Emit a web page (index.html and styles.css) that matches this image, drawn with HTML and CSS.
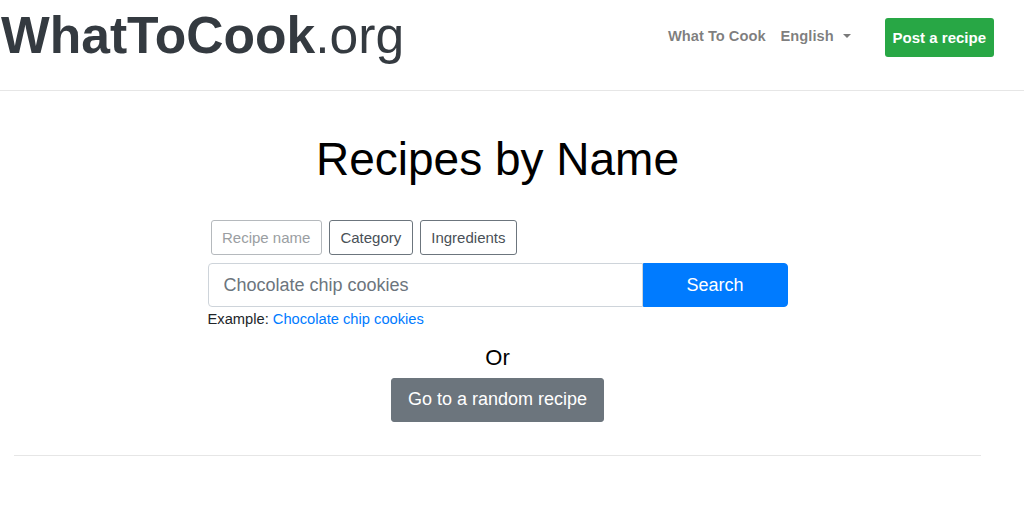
FILE: index.html
```html
<!DOCTYPE html>
<html lang="en">
<head>
<meta charset="utf-8">
<title>WhatToCook.org</title>
<link rel="stylesheet" href="styles.css">
</head>
<body>
<header class="site-header">
  <a class="brand" href="#"><b>WhatToCook</b>.org</a>
  <nav class="nav">
    <a class="nav-link" href="#">What To Cook</a>
    <a class="nav-link dropdown" href="#">English<span class="caret"></span></a>
    <a class="btn-post" href="#">Post a recipe</a>
  </nav>
</header>
<main class="main">
  <h1 class="title">Recipes by Name</h1>
  <div class="search">
    <div class="tabs">
      <button class="tab tab-active">Recipe name</button>
      <button class="tab">Category</button>
      <button class="tab">Ingredients</button>
    </div>
    <form class="search-row">
      <input class="search-input" type="text" placeholder="Chocolate chip cookies">
      <button class="btn-search" type="button">Search</button>
    </form>
    <p class="example">Example: <a href="#">Chocolate chip cookies</a></p>
  </div>
  <p class="or">Or</p>
  <div class="random-wrap"><button class="btn-random">Go to a random recipe</button></div>
  <hr class="divider">
</main>
</body>
</html>
```
FILE: styles.css
```css
* { box-sizing: border-box; }
body {
  margin: 0;
  font-family: "Liberation Sans", Arial, sans-serif;
  font-size: 15px;
  color: #212529;
  background: #fff;
}
a { text-decoration: none; }

.site-header {
  height: 91px;
  border-bottom: 1px solid #e6e6e6;
  display: flex;
  align-items: center;
  justify-content: space-between;
  padding: 0 30px 0 1px;
}
.brand {
  font-size: 51.6px;
  color: #343a40;
  line-height: 1;
  margin-top: -19px;
}
.brand b { font-weight: 700; }

.nav {
  display: flex;
  align-items: center;
  margin-top: -15px;
}
.nav-link {
  font-weight: 700;
  font-size: 14.7px;
  color: rgba(0,0,0,.52);
  line-height: 22px;
  white-space: nowrap;
  margin-bottom: 3px;
}
.nav-link + .nav-link { margin-left: 15px; }
.caret {
  display: inline-block;
  margin-left: 9px;
  vertical-align: 3px;
  border-top: 4px solid rgba(0,0,0,.52);
  border-left: 4px solid transparent;
  border-right: 4px solid transparent;
}
.btn-post {
  margin-left: 34px;
  background: #28a745;
  color: #fff;
  font-weight: 700;
  font-size: 15px;
  line-height: 22px;
  padding: 8.5px 8px 8.5px;
  border-radius: 3px;
  white-space: nowrap;
  text-align: center;
}

.main {
  width: 967px;
  margin-left: 14px;
  display: flex;
  flex-direction: column;
  align-items: center;
}
.title {
  margin: 41px 0 0;
  font-size: 46px;
  font-weight: 400;
  line-height: 1.2;
  color: #000;
}
.search {
  width: 580px;
  margin-top: 33px;
}
.tabs {
  display: flex;
  gap: 7px;
  padding-left: 3px;
}
.tab {
  font-family: inherit;
  font-size: 15px;
  line-height: 22px;
  padding: 5.5px 10.5px 5.5px;
  background: #fff;
  border: 1px solid #6c757d;
  border-radius: 3px;
  color: #495057;
}
.tab-active {
  border-color: #b5b9bd;
  color: #9a9ea2;
}
.search-row {
  display: flex;
  margin: 8px 0 0;
}
.search-input {
  flex: 1;
  height: 44px;
  font-family: inherit;
  font-size: 18px;
  padding: 7px 15px;
  border: 1px solid #ced4da;
  border-radius: 4px 0 0 4px;
  color: #495057;
}
.search-input::placeholder { color: #6c757d; }
.btn-search {
  width: 145px;
  height: 44px;
  font-family: inherit;
  font-size: 18px;
  background: #007bff;
  color: #fff;
  border: 1px solid #007bff;
  border-radius: 0 4px 4px 0;
}
.example {
  margin: 1px 0 0;
  font-size: 14.7px;
  line-height: 22px;
  color: #212529;
}
.example a { color: #007bff; }
.or {
  margin: 13px 0 0;
  font-size: 22px;
  line-height: 30px;
  color: #000;
}
.random-wrap { margin-top: 5px; }
.btn-random {
  font-family: inherit;
  font-size: 18px;
  line-height: 27px;
  padding: 7px 15.5px 8px;
  background: #6c757d;
  border: 1px solid #6c757d;
  border-radius: 3px;
  color: #fff;
}
.divider {
  align-self: stretch;
  margin: 33px 0 0;
  border: 0;
  border-top: 1px solid #e6e6e6;
}
```
